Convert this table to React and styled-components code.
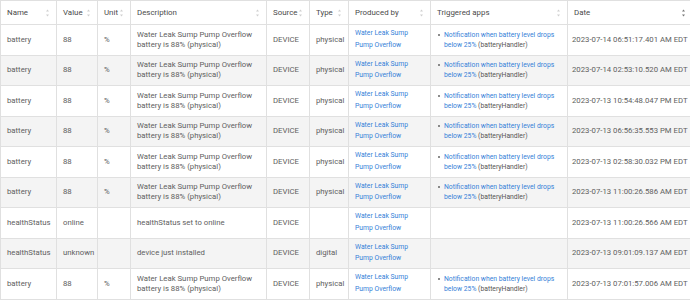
import React from 'react';
import styled, { createGlobalStyle } from 'styled-components';

const Global = createGlobalStyle`
  html, body { margin: 0; padding: 0; overflow: hidden; background: #fff; }
  body { font-family: Roboto, "Liberation Sans", Arial, sans-serif; }
`;

const Table = styled.table`
  border-collapse: collapse;
  table-layout: fixed;
  width: 691px;
  font-size: 7.75px;
  font-weight: 400;
  color: #606060;
`;

const Th = styled.th`
  height: 23px;
  padding: 0 ${p => (p.$active ? 5 : 7)}px 0 6px;
  border: 1px solid #e0e0e0;
  font-weight: 400;
  font-size: 7.9px;
  text-align: left;
  color: #4a4a4a;
  background: #fff;
`;

const HeadInner = styled.div`
  display: flex;
  align-items: center;
  justify-content: space-between;
  white-space: nowrap;
`;

const SortIcon = styled.svg`
  flex: none;
  width: 3px;
  height: 8px;
`;

const Tr = styled.tr`
  background: ${p => (p.$alt ? '#f4f4f4' : '#fff')};
`;

const Td = styled.td`
  height: 29.5px;
  padding: 0 ${p => (p.$tight ? 1 : 6)}px 0 ${p => (p.$tight ? 4 : 6)}px;
  border: 1px solid #e0e0e0;
  vertical-align: middle;
  font-weight: 400;
  line-height: 10px;
  white-space: ${p => (p.$nowrap ? 'nowrap' : 'normal')};
  overflow: hidden;
`;

const Link = styled.a`
  color: #3581d8;
  text-decoration: none;
  font-size: ${p => (p.$tall ? '6.8px' : 'inherit')};
  line-height: ${p => (p.$tall ? '11.3px' : 'inherit')};
  display: ${p => (p.$tall ? 'block' : 'inline')};
`;

const AppList = styled.ul`
  margin: 0;
  padding: 0 0 0 7px;
  list-style: none;
  font-size: 6.8px;
  line-height: 10px;
`;

const AppItem = styled.li`
  position: relative;
  &::before {
    content: '';
    position: absolute;
    left: -6px;
    top: 4px;
    width: 2px;
    height: 2px;
    border-radius: 1px;
    background: #666;
  }
`;

const Handler = styled.span`
  color: #555;
`;

const cols = [56, 41, 33, 136, 43, 39, 82, 137, 123];
const heads = ['Name', 'Value', 'Unit', 'Description', 'Source', 'Type', 'Produced by', 'Triggered apps', 'Date'];

const bat = (date) => ({
  name: 'battery', value: '88', unit: '%',
  desc: 'Water Leak Sump Pump Overflow battery is 88% (physical)',
  source: 'DEVICE', type: 'physical', trig: true, date,
});

const rows = [
  bat('2023-07-14 06:51:17.401 AM EDT'),
  bat('2023-07-14 02:53:10.520 AM EDT'),
  bat('2023-07-13 10:54:48.047 PM EDT'),
  bat('2023-07-13 06:56:35.553 PM EDT'),
  bat('2023-07-13 02:58:30.032 PM EDT'),
  bat('2023-07-13 11:00:26.586 AM EDT'),
  { name: 'healthStatus', value: 'online', unit: '', desc: 'healthStatus set to online', source: 'DEVICE', type: '', trig: false, date: '2023-07-13 11:00:26.566 AM EDT' },
  { name: 'healthStatus', value: 'unknown', unit: '', desc: 'device just installed', source: 'DEVICE', type: 'digital', trig: false, date: '2023-07-13 09:01:09.137 AM EDT' },
  bat('2023-07-13 07:01:57.006 AM EDT'),
];

function Sort({ active }) {
  const c = active ? '#777' : '#d0d0d0';
  return (
    <SortIcon viewBox="0 0 3 8">
      <path d="M1.5 0.5 L3 2.5 L0 2.5 Z" fill={c} />
      <path d="M1.5 7.5 L3 5.5 L0 5.5 Z" fill={c} />
    </SortIcon>
  );
}

export default function App() {
  return (
    <>
      <Global />
      <Table>
        <colgroup>
          {cols.map((w, i) => <col key={i} style={{ width: w }} />)}
        </colgroup>
        <thead>
          <tr>
            {heads.map((h, i) => (
              <Th key={h} $active={i === 8}>
                <HeadInner>
                  <span>{h}</span>
                  <Sort active={i === 8} />
                </HeadInner>
              </Th>
            ))}
          </tr>
        </thead>
        <tbody>
          {rows.map((r, i) => (
            <Tr key={i} $alt={i % 2 === 1}>
              <Td>{r.name}</Td>
              <Td>{r.value}</Td>
              <Td>{r.unit}</Td>
              <Td>{r.desc}</Td>
              <Td>{r.source}</Td>
              <Td>{r.type}</Td>
              <Td>
                <Link $tall href="#">Water Leak Sump Pump Overflow</Link>
              </Td>
              <Td>
                {r.trig && (
                  <AppList>
                    <AppItem>
                      <Link href="#">Notification when battery level drops below 25%</Link>{' '}
                      <Handler>(batteryHandler)</Handler>
                    </AppItem>
                  </AppList>
                )}
              </Td>
              <Td $tight $nowrap>{r.date}</Td>
            </Tr>
          ))}
        </tbody>
      </Table>
    </>
  );
}
